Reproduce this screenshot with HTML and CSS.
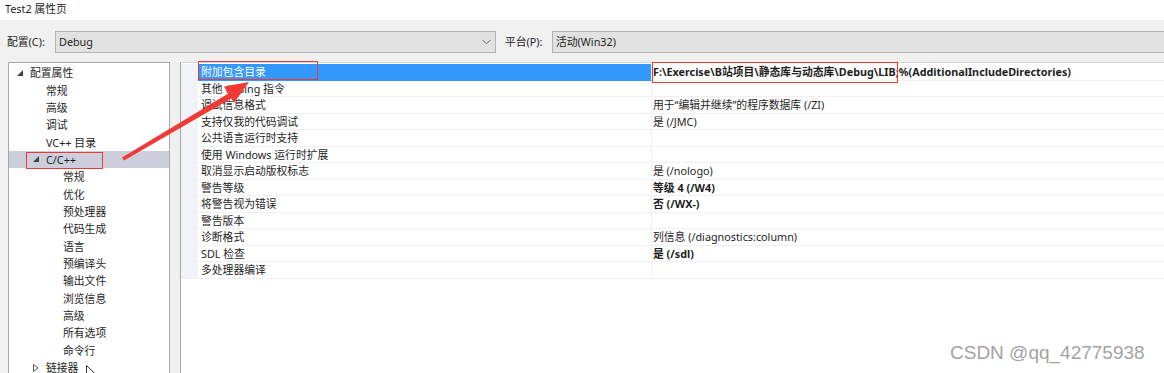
FILE: index.html
```html
<!DOCTYPE html>
<html>
<head>
<meta charset="utf-8">
<title>Test2 属性页</title>
<link rel="stylesheet" href="styles.css">
</head>
<body>
<div class="title">Test2 属性页</div>
<div class="config">
  <span class="lbl">配置(C):</span>
  <div class="combo combo-cfg">
    <span class="combo-text">Debug</span>
    <svg class="chev" width="9" height="6" viewBox="0 0 9 6"><path d="M0.5 0.8 L4.5 4.8 L8.5 0.8" fill="none" stroke="#6d6d6d" stroke-width="1"/></svg>
  </div>
  <span class="lbl lbl-plat">平台(P):</span>
  <div class="combo combo-plat"><span class="combo-text">活动(Win32)</span></div>
</div>
<div class="main">
  <div class="tree">
    <div class="node l0"><span class="tri"><svg width="6" height="6" viewBox="0 0 6 6"><polygon points="6,0 6,6 0,6" fill="#404040"/></svg></span>配置属性</div>
    <div class="node l1"><span class="tri"></span>常规</div>
    <div class="node l1"><span class="tri"></span>高级</div>
    <div class="node l1"><span class="tri"></span>调试</div>
    <div class="node l1"><span class="tri"></span>VC++ 目录</div>
    <div class="node l1 current"><span class="tri"><svg width="6" height="6" viewBox="0 0 6 6"><polygon points="6,0 6,6 0,6" fill="#404040"/></svg></span>C/C++</div>
    <div class="node l2"><span class="tri"></span>常规</div>
    <div class="node l2"><span class="tri"></span>优化</div>
    <div class="node l2"><span class="tri"></span>预处理器</div>
    <div class="node l2"><span class="tri"></span>代码生成</div>
    <div class="node l2"><span class="tri"></span>语言</div>
    <div class="node l2"><span class="tri"></span>预编译头</div>
    <div class="node l2"><span class="tri"></span>输出文件</div>
    <div class="node l2"><span class="tri"></span>浏览信息</div>
    <div class="node l2"><span class="tri"></span>高级</div>
    <div class="node l2"><span class="tri"></span>所有选项</div>
    <div class="node l2"><span class="tri"></span>命令行</div>
    <div class="node l1"><span class="tri"><svg width="6" height="8" viewBox="0 0 6 8"><polygon points="0.5,0.5 5,4 0.5,7.5" fill="none" stroke="#555" stroke-width="1"/></svg></span>链接器<svg class="cursor" width="12" height="16" viewBox="0 0 12 16"><path d="M0.5 0.5 L0.5 13 L3.5 10.2 L5.8 15.3 L7.8 14.4 L5.6 9.4 L9.8 9.4 Z" fill="#fff" stroke="#333" stroke-width="1"/></svg></div>
  </div>
  <div class="grid">
    <div class="row sel"><div class="gut"></div><div class="name">附加包含目录</div><div class="val b">F:\Exercise\B站项目\静态库与动态库\Debug\LIB;%(AdditionalIncludeDirectories)</div></div>
    <div class="row"><div class="gut"></div><div class="name">其他 #using 指令</div><div class="val"></div></div>
    <div class="row"><div class="gut"></div><div class="name">调试信息格式</div><div class="val">用于“编辑并继续”的程序数据库 (/ZI)</div></div>
    <div class="row"><div class="gut"></div><div class="name">支持仅我的代码调试</div><div class="val">是 (/JMC)</div></div>
    <div class="row"><div class="gut"></div><div class="name">公共语言运行时支持</div><div class="val"></div></div>
    <div class="row"><div class="gut"></div><div class="name">使用 Windows 运行时扩展</div><div class="val"></div></div>
    <div class="row"><div class="gut"></div><div class="name">取消显示启动版权标志</div><div class="val">是 (/nologo)</div></div>
    <div class="row"><div class="gut"></div><div class="name">警告等级</div><div class="val b">等级 4 (/W4)</div></div>
    <div class="row"><div class="gut"></div><div class="name">将警告视为错误</div><div class="val b">否 (/WX-)</div></div>
    <div class="row"><div class="gut"></div><div class="name">警告版本</div><div class="val"></div></div>
    <div class="row"><div class="gut"></div><div class="name">诊断格式</div><div class="val">列信息 (/diagnostics:column)</div></div>
    <div class="row"><div class="gut"></div><div class="name">SDL 检查</div><div class="val b">是 (/sdl)</div></div>
    <div class="row"><div class="gut"></div><div class="name">多处理器编译</div><div class="val"></div></div>
  </div>
</div>
<svg class="overlay" width="1164" height="373" viewBox="0 0 1164 373">
  <rect x="198.5" y="61.5" width="119" height="18" fill="none" stroke="#e8393b" stroke-width="1"/>
  <rect x="652.5" y="62.5" width="245" height="20" fill="none" stroke="#e8393b" stroke-width="1"/>
  <rect x="26.5" y="152.5" width="76" height="16" fill="none" stroke="#e8393b" stroke-width="1"/>
  <polygon points="122,157.5 230,92.5 233,97.5 124,160.5" fill="#ef3a35"/>
  <polygon points="249,82 224,86.5 234,103" fill="#ef3a35"/>
</svg>
<div class="wm">CSDN @qq_42775938</div>
</body>
</html>
```
FILE: styles.css
```css
* { box-sizing: border-box; }
html, body { margin: 0; padding: 0; }
body {
  width: 1164px;
  height: 373px;
  overflow: hidden;
  position: relative;
  background: #f0f0f0;
  font-family: "Noto Sans", "Noto Sans CJK SC", sans-serif;
  font-size: 10.8px;
  color: #1e1e1e;
}
.title {
  height: 20px;
  background: #fff;
  padding-left: 5px;
  line-height: 17px;
}
.config {
  height: 42px;
  display: flex;
  align-items: flex-start;
  padding: 11px 0 0 7px;
}
.lbl {
  width: 48px;
  line-height: 22px;
}
.lbl-plat {
  margin-left: 9px;
  width: 47px;
}
.combo {
  height: 22px;
  background: #e1e1e1;
  border: 1px solid #b3b3b3;
  display: flex;
  align-items: center;
  padding-left: 3px;
}
.combo-cfg {
  width: 441px;
  justify-content: space-between;
  padding-right: 4px;
}
.combo-plat {
  flex: 1;
  margin-right: -2px;
}
.combo-text { line-height: 20px; }
.chev { display: block; }
.main {
  display: flex;
  padding-left: 8px;
  height: 311px;
}
.tree {
  width: 162px;
  background: #fff;
  border: 1px solid #a8a8a8;
  border-bottom: none;
  padding-top: 1px;
}
.node {
  height: 17.35px;
  line-height: 17px;
  display: flex;
  align-items: center;
  white-space: nowrap;
}
.node.l0 { padding-left: 8px; }
.node.l1 { padding-left: 24px; }
.node.l2 { padding-left: 41px; }
.node.current { background: #cccedb; }
.tri {
  width: 13px;
  height: 17px;
  display: flex;
  align-items: center;
}
.tri svg { display: block; }
.cursor { margin-left: 8px; margin-top: 10px; display: block; }
.grid {
  flex: 1;
  margin-left: 10px;
  background: #fff;
  border-left: 1px solid #a8a8a8;
  border-top: 1px solid #d4d4d4;
  padding-top: 1px;
}
.row {
  display: flex;
  height: 16.5px;
  line-height: 16px;
  white-space: nowrap;
}
.gut {
  width: 17px;
  background: #f1f3f8;
}
.name {
  width: 454px;
  padding-left: 3px;
  border-bottom: 1px solid #f0f0f0;
  border-right: 1px solid #f0f0f0;
}
.val {
  flex: 1;
  padding-left: 1px;
  border-bottom: 1px solid #f0f0f0;
}
.b { font-weight: bold; }
.row.sel .name {
  background: #3399ff;
  color: #fff;
  border-bottom-color: #3399ff;
}
.overlay {
  position: absolute;
  left: 0;
  top: 0;
  pointer-events: none;
}
.wm {
  position: absolute;
  left: 950px;
  top: 341px;
  font-family: "Liberation Sans", Arial, sans-serif;
  font-size: 19px;
  line-height: 24px;
  color: #a3a3a3;
  text-shadow: 0 0 1px #fff, 1px 1px 0 #fff;
  white-space: nowrap;
}
```
